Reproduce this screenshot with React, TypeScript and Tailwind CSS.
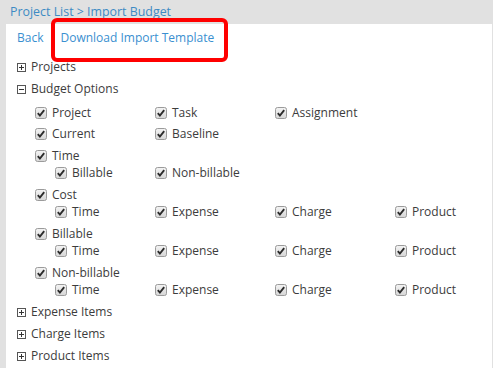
import React from "react";

const CheckIcon = () => (
  <svg width="12" height="12" viewBox="0 0 12 12" className="shrink-0">
    <defs>
      <linearGradient id="cbg" x1="0" y1="0" x2="0" y2="1">
        <stop offset="0" stopColor="#f4f4f4" />
        <stop offset="1" stopColor="#d6d6d6" />
      </linearGradient>
    </defs>
    <rect x="0.5" y="0.5" width="11" height="11" rx="2" fill="url(#cbg)" stroke="#9b9b9b" />
    <path d="M2.8 6.2 L4.9 8.6 L9.2 3.2" stroke="#2b2b2b" strokeWidth="1.9" fill="none" />
  </svg>
);

const Toggle = ({ open }: { open?: boolean }) => (
  <svg width="9" height="9" viewBox="0 0 9 9" className="shrink-0">
    <rect x="0.5" y="0.5" width="8" height="8" fill="#fff" stroke="#555" />
    <path d="M2 4.5 H7" stroke="#333" strokeWidth="1" />
    {!open && <path d="M4.5 2 V7" stroke="#333" strokeWidth="1" />}
  </svg>
);

const Cb = ({ label, w = "w-[120px]" }: { label: string; w?: string }) => (
  <div className={`flex shrink-0 items-center gap-[5px] ${w}`}>
    <CheckIcon />
    <span className="whitespace-nowrap">{label}</span>
  </div>
);

const TopRow = ({ items }: { items: string[] }) => (
  <div className="flex items-center h-[21.5px] pt-[4px]">
    {items.map((l) => (
      <Cb key={l} label={l} />
    ))}
  </div>
);

const SubRow = ({ items }: { items: string[] }) => (
  <div className="flex items-center h-[17.5px] pl-[20px]">
    {items.map((l, i) => (
      <Cb key={l} label={l} w={i === 0 ? "w-[100px]" : "w-[120px]"} />
    ))}
  </div>
);

const TreeHead = ({ label, open }: { label: string; open?: boolean }) => (
  <div className="flex items-center h-[22px] gap-[5px]">
    <Toggle open={open} />
    <span>{label}</span>
  </div>
);

export default function App() {
  const four = ["Time", "Expense", "Charge", "Product"];
  return (
    <div className="w-[493px] h-[368px] overflow-hidden bg-[#e1e1e1] font-['Open_Sans',sans-serif] text-[12px] leading-[18px] text-[#3c3c3c]">
      <div className="h-6 flex items-center pl-[10px] text-[12.4px] text-[#3d8bc4]">
        Project List &gt; Import Budget
      </div>
      <div className="relative ml-[6px] mr-px h-[344px] bg-white pl-[11px]">
        <div className="flex h-[32px] pt-[5px] gap-[17px] text-[#3a8fd0]">
          <span>Back</span>
          <span>Download Import Template</span>
        </div>
        <div className="absolute left-[45px] top-[-6px] w-[177px] h-[44px] border-[4px] border-[#ff0000] rounded-[6px]" />
        <TreeHead label="Projects" />
        <TreeHead label="Budget Options" open />
        <div className="ml-[18px] mb-[2px]">
          <TopRow items={["Project", "Task", "Assignment"]} />
          <TopRow items={["Current", "Baseline"]} />
          <TopRow items={["Time"]} />
          <SubRow items={["Billable", "Non-billable"]} />
          <TopRow items={["Cost"]} />
          <SubRow items={four} />
          <TopRow items={["Billable"]} />
          <SubRow items={four} />
          <TopRow items={["Non-billable"]} />
          <SubRow items={four} />
        </div>
        <TreeHead label="Expense Items" />
        <TreeHead label="Charge Items" />
        <TreeHead label="Product Items" />
      </div>
    </div>
  );
}
